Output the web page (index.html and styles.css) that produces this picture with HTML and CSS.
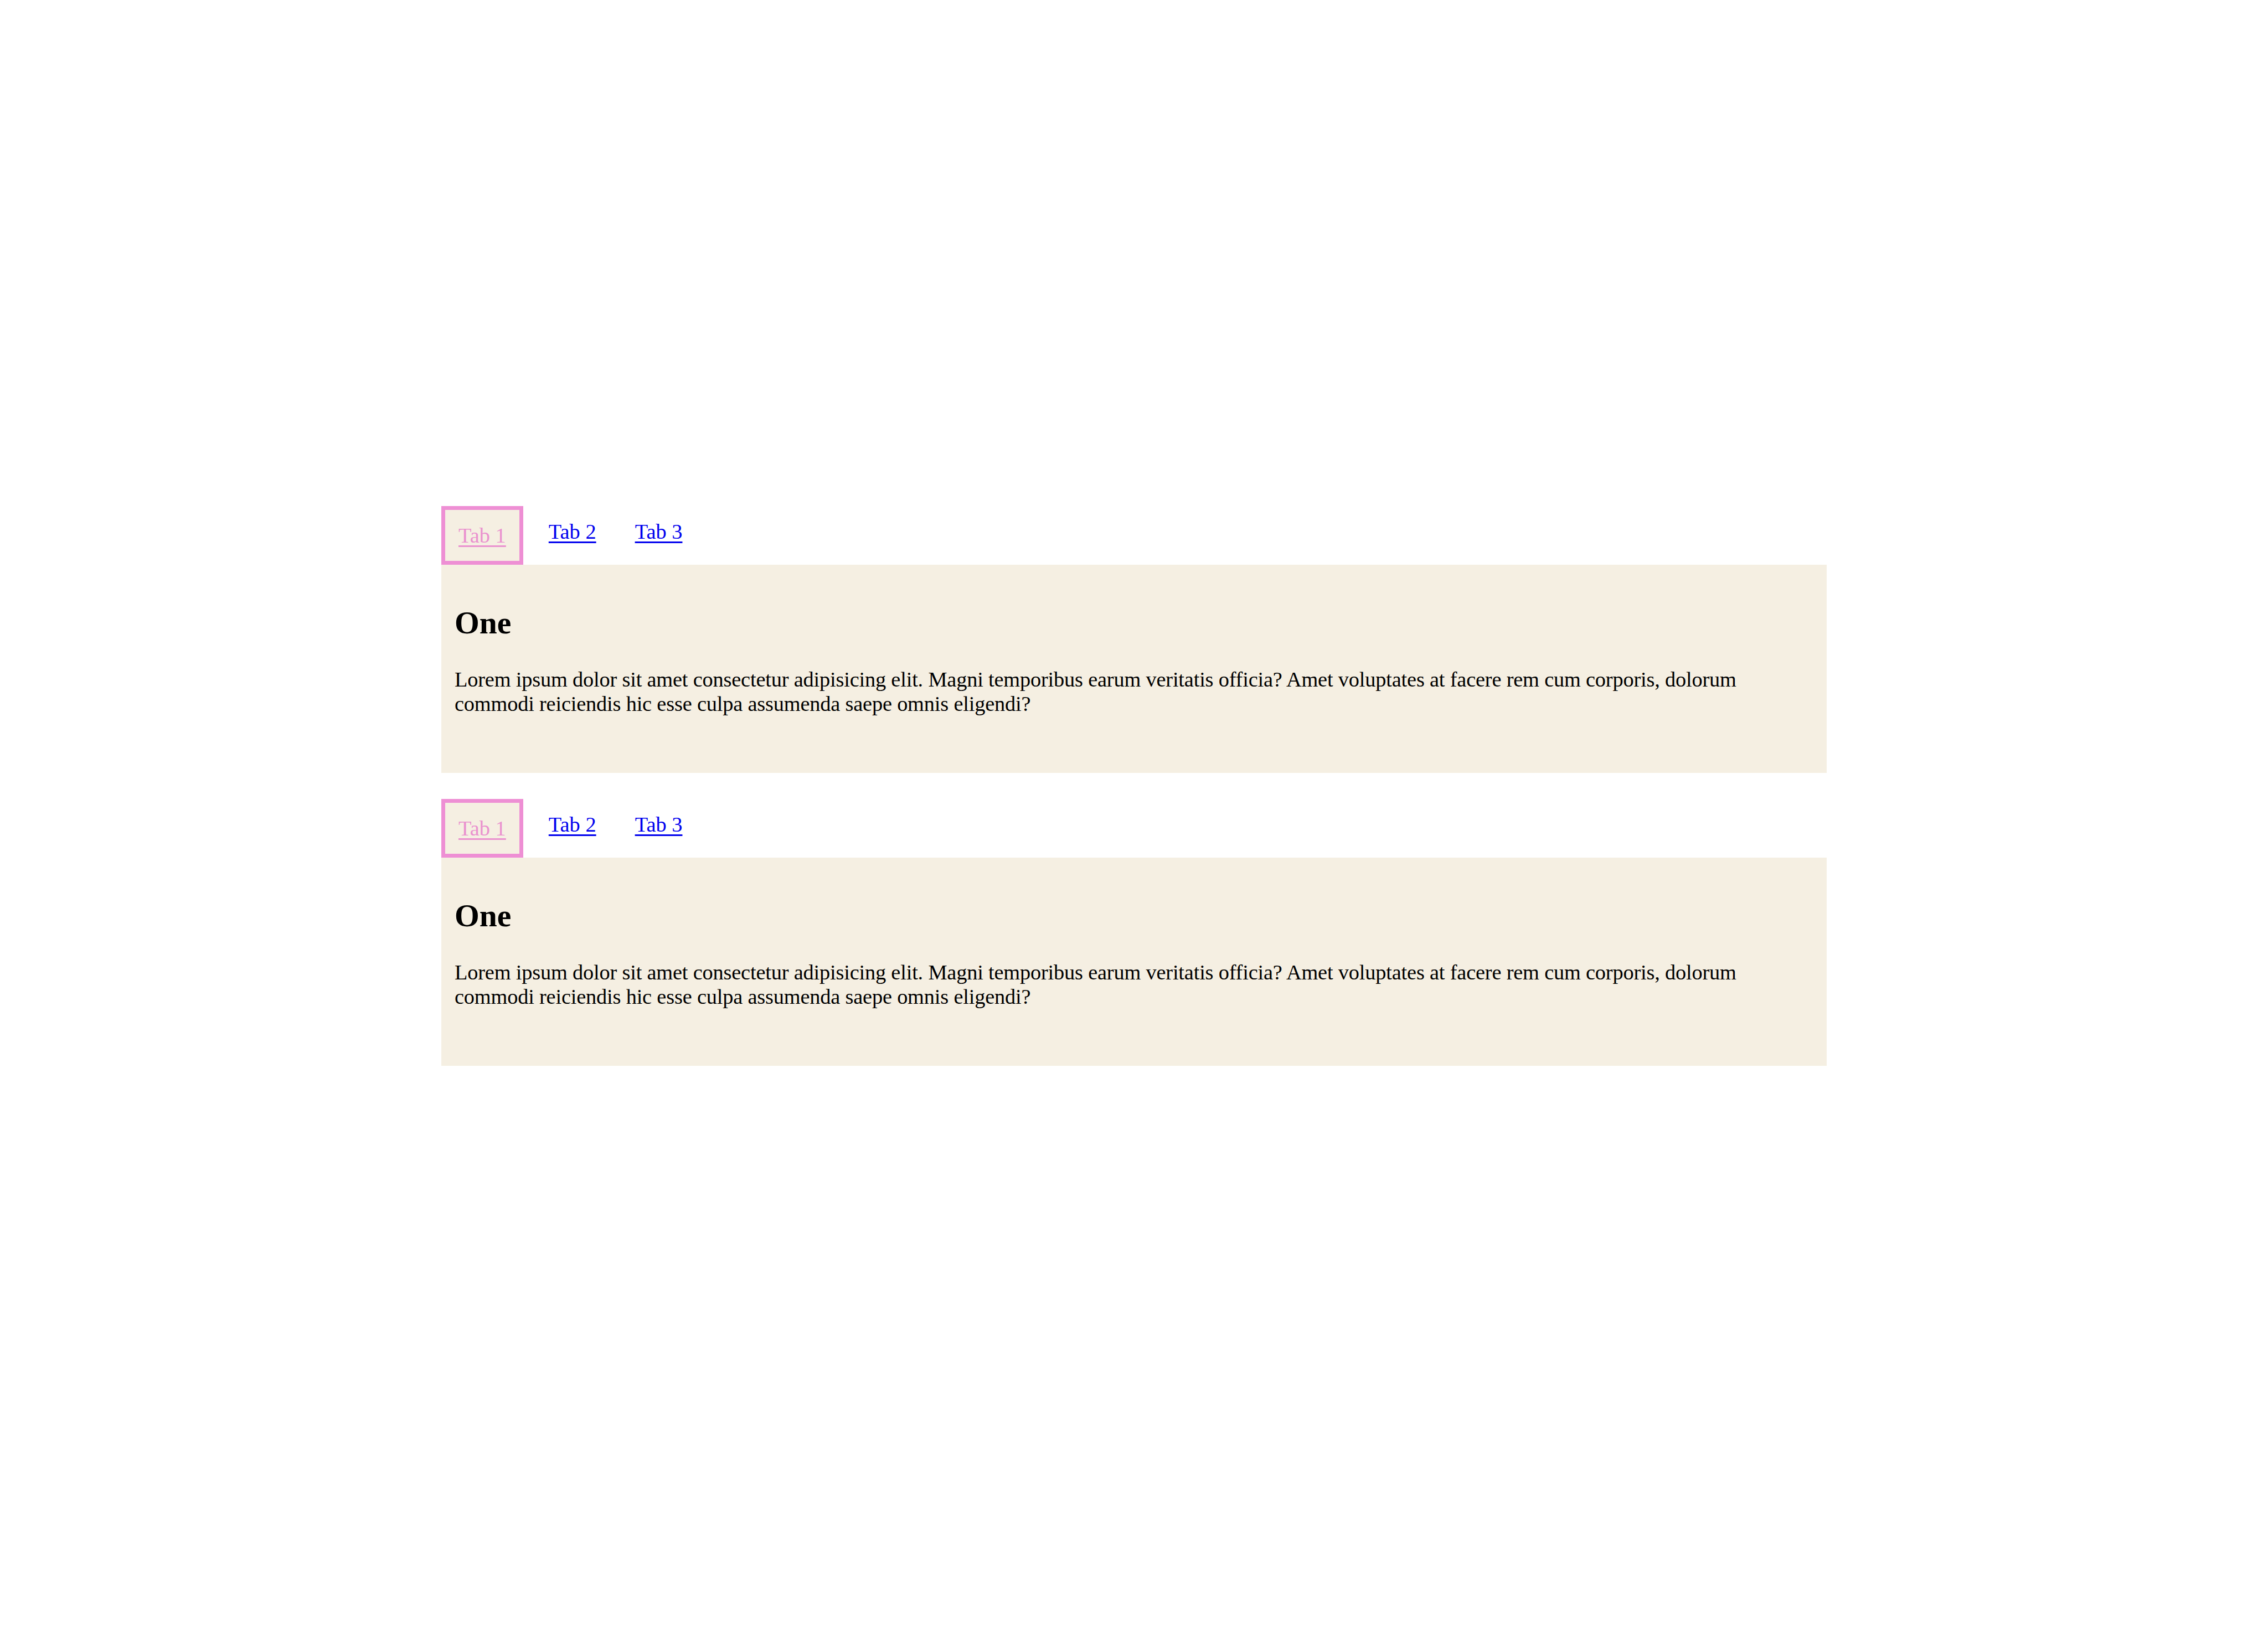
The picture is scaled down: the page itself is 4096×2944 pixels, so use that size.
FILE: index.html
```html
<!DOCTYPE html>
<html lang="en">
<head>
<meta charset="utf-8">
<title>Tabs</title>
<link rel="stylesheet" href="styles.css">
</head>
<body>
<main class="page">
  <section class="tabs">
    <nav class="tab-list">
      <a class="tab tab-active" href="#one">Tab 1</a>
      <a class="tab" href="#two">Tab 2</a>
      <a class="tab" href="#three">Tab 3</a>
    </nav>
    <div class="tab-panel">
      <h2 class="panel-title">One</h2>
      <p class="panel-text">Lorem ipsum dolor sit amet consectetur adipisicing elit. Magni temporibus earum veritatis officia? Amet voluptates at facere rem cum corporis, dolorum commodi reiciendis hic esse culpa assumenda saepe omnis eligendi?</p>
    </div>
  </section>
  <section class="tabs">
    <nav class="tab-list">
      <a class="tab tab-active" href="#one">Tab 1</a>
      <a class="tab" href="#two">Tab 2</a>
      <a class="tab" href="#three">Tab 3</a>
    </nav>
    <div class="tab-panel">
      <h2 class="panel-title">One</h2>
      <p class="panel-text">Lorem ipsum dolor sit amet consectetur adipisicing elit. Magni temporibus earum veritatis officia? Amet voluptates at facere rem cum corporis, dolorum commodi reiciendis hic esse culpa assumenda saepe omnis eligendi?</p>
    </div>
  </section>
</main>
</body>
</html>
```

FILE: styles.css
```css
html, body {
  margin: 0;
  padding: 0;
  background: #ffffff;
}

body {
  font-family: "Liberation Serif", "Times New Roman", serif;
  font-size: 38.4px;
  color: #000000;
}

.page {
  width: 2502px;
  margin: 0 auto;
  padding-top: 914px;
  display: flex;
  flex-direction: column;
  gap: 47px;
}

.tabs {
  display: flex;
  flex-direction: column;
}

.tab-list {
  display: flex;
  align-items: flex-start;
  gap: 22px;
}

.tab {
  display: block;
  padding: 24px;
  color: #0000ee;
  text-decoration: underline;
  text-decoration-thickness: 3px;
  text-underline-offset: 5px;
}

.tab-active {
  color: #ea92cf;
  background: #f5efe2;
  border: 7.2px solid #ee8fd4;
}

.tab-panel {
  background: #f5efe2;
  padding: 24px 24px 65px;
}

.panel-title {
  font-size: 57.6px;
  font-weight: bold;
  margin: 47.8px 0;
}

.panel-text {
  font-size: 38.4px;
  letter-spacing: -0.2px;
  margin: 38.4px 0;
}
```
